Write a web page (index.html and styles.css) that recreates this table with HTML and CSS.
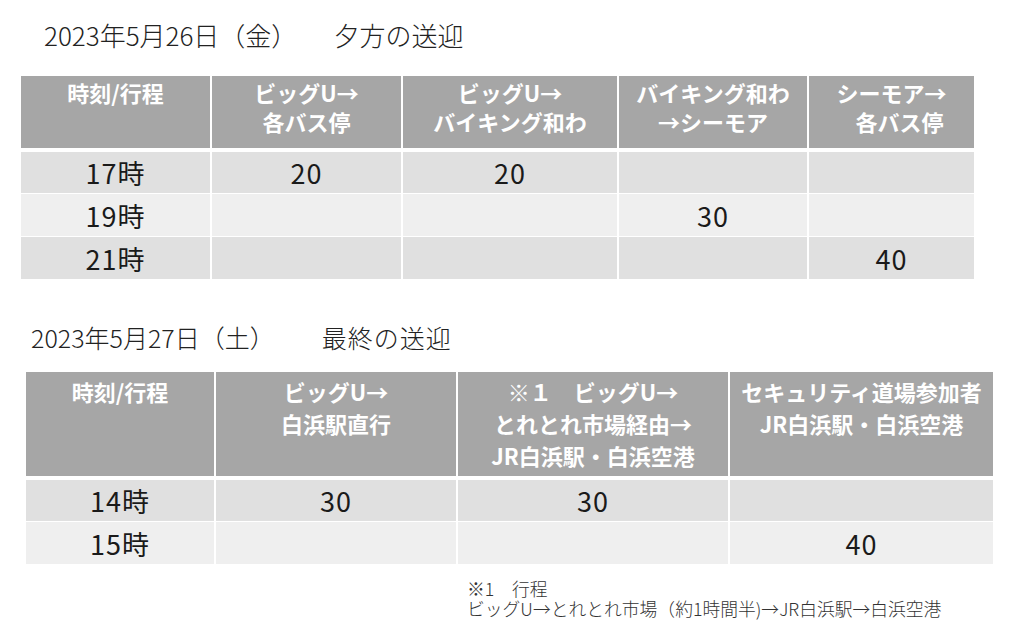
FILE: index.html
```html
<!DOCTYPE html>
<html lang="ja">
<head>
<meta charset="utf-8">
<title>送迎時刻表</title>
<link rel="stylesheet" href="styles.css">
</head>
<body>
<main class="page">
  <section class="block block-1">
    <h2 class="title title-1"><span class="date">2023年5月26日（金）</span><span class="label">夕方の送迎</span></h2>
    <div class="grid grid-1">
      <div class="cell head">時刻/行程</div>
      <div class="cell head">ビッグU→<br>各バス停</div>
      <div class="cell head">ビッグU→<br>バイキング和わ</div>
      <div class="cell head">バイキング和わ<br>→シーモア</div>
      <div class="cell head"><span class="line">シーモア→</span><br><span class="line shift">各バス停</span></div>

      <div class="cell odd">17時</div>
      <div class="cell odd">20</div>
      <div class="cell odd">20</div>
      <div class="cell odd"></div>
      <div class="cell odd"></div>

      <div class="cell even">19時</div>
      <div class="cell even"></div>
      <div class="cell even"></div>
      <div class="cell even">30</div>
      <div class="cell even"></div>

      <div class="cell odd">21時</div>
      <div class="cell odd"></div>
      <div class="cell odd"></div>
      <div class="cell odd"></div>
      <div class="cell odd">40</div>
    </div>
  </section>

  <section class="block block-2">
    <h2 class="title title-2"><span class="date">2023年5月27日（土）</span><span class="label">最終の送迎</span></h2>
    <div class="grid grid-2">
      <div class="cell head">時刻/行程</div>
      <div class="cell head">ビッグU→<br>白浜駅直行</div>
      <div class="cell head">※１　ビッグU→<br>とれとれ市場経由→<br>JR白浜駅・白浜空港</div>
      <div class="cell head">セキュリティ道場参加者<br>JR白浜駅・白浜空港</div>

      <div class="cell odd">14時</div>
      <div class="cell odd">30</div>
      <div class="cell odd">30</div>
      <div class="cell odd"></div>

      <div class="cell even">15時</div>
      <div class="cell even"></div>
      <div class="cell even"></div>
      <div class="cell even">40</div>
    </div>
    <div class="note">
      <p class="note-line">※1　行程</p>
      <p class="note-line">ビッグU→とれとれ市場（約1時間半)→JR白浜駅→白浜空港</p>
    </div>
  </section>
</main>
</body>
</html>
```

FILE: styles.css
```css
html, body {
  margin: 0;
  padding: 0;
  background: #ffffff;
}

body {
  font-family: "Noto Sans CJK JP", "Noto Sans", sans-serif;
  color: #1a1a1a;
}

.page {
  width: 1024px;
  height: 642px;
  overflow: hidden;
  padding-top: 20px;
  box-sizing: border-box;
}

.title {
  display: flex;
  margin: 0;
  font-weight: 300;
  white-space: nowrap;
  color: #222;
}

.title-1 {
  font-size: 26px;
  line-height: 30px;
  padding-left: 44px;
}

.title-1 .label {
  margin-left: 36px;
}

.title-2 {
  font-size: 25px;
  line-height: 28px;
  padding-left: 31px;
}

.title-2 .label {
  margin-left: 47px;
  letter-spacing: 1px;
}

.grid {
  display: grid;
  column-gap: 2px;
  row-gap: 1px;
}

.grid-1 {
  margin-top: 26px;
  margin-left: 21px;
  grid-template-columns: 189px 189px 214px 188px 165px;
  grid-template-rows: 75px 41px 42px 42px;
}

.grid-2 {
  margin-top: 21px;
  margin-left: 26px;
  grid-template-columns: 188px 240px 270px 263px;
  grid-template-rows: 107px 41px 42px;
}

.block-2 {
  margin-top: 44px;
}

.cell {
  white-space: nowrap;
}

.head {
  background: #a6a6a6;
  color: #ffffff;
  font-weight: 700;
  font-size: 22px;
  text-align: center;
  margin-bottom: 3px;
  box-sizing: border-box;
}

.grid-1 .head {
  line-height: 29px;
  padding-top: 2px;
}

.grid-2 .head {
  line-height: 32px;
  padding-top: 3px;
}

.shift {
  display: inline-block;
  padding-left: 16px;
}

.odd,
.even {
  display: flex;
  align-items: center;
  justify-content: center;
  font-size: 27px;
  letter-spacing: 1px;
  color: #1a1a1a;
}

.odd {
  background: #e0e0e0;
}

.even {
  background: #efefef;
}

.note {
  margin: 14px 0 0 467px;
  font-size: 17.8px;
  font-weight: 300;
  color: #333;
  white-space: nowrap;
}

.note-line {
  margin: 0;
  line-height: 20px;
}
```
